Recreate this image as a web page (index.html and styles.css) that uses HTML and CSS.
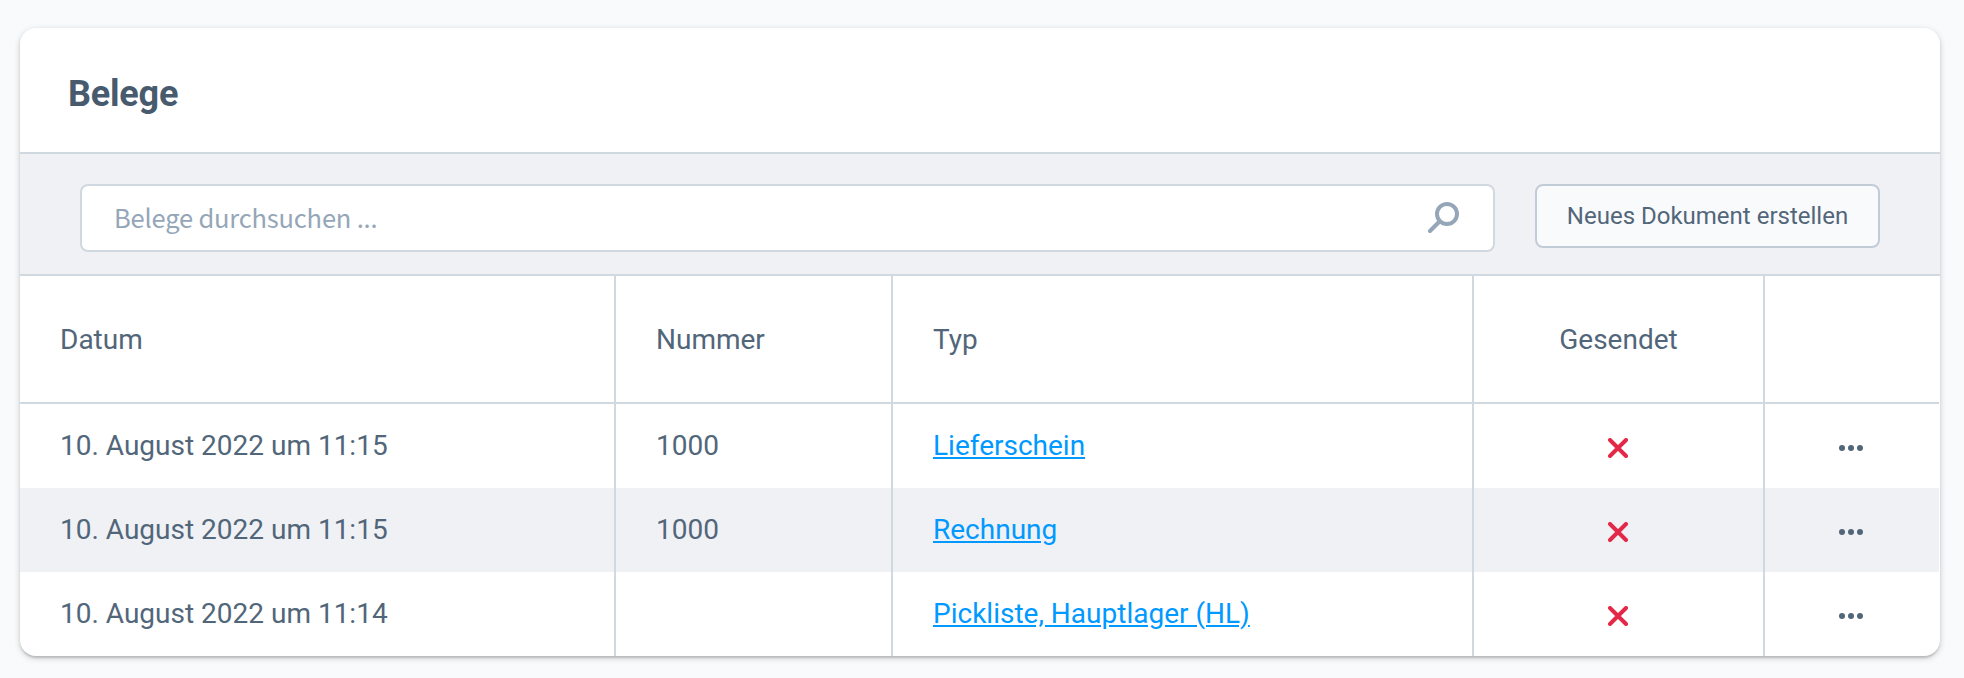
FILE: index.html
```html
<!DOCTYPE html>
<html lang="de">
<head>
<meta charset="utf-8">
<title>Belege</title>
<link rel="stylesheet" href="styles.css">
</head>
<body>
<svg class="sprite" width="0" height="0" aria-hidden="true">
  <symbol id="cross" viewBox="0 0 20 20"><path d="M2 2 18 18M18 2 2 18" fill="none" stroke="currentColor" stroke-width="4" stroke-linecap="round"/></symbol>
  <symbol id="dots" viewBox="0 0 24 6"><circle cx="3" cy="3" r="3"/><circle cx="12" cy="3" r="3"/><circle cx="21" cy="3" r="3"/></symbol>
</svg>
<main class="card">
  <header class="card-header"><h1 class="title">Belege</h1></header>
  <div class="toolbar">
    <label class="search">
      <input class="search-input" type="text" placeholder="Belege durchsuchen ...">
      <svg class="search-icon" width="32" height="32" viewBox="0 0 32 32" fill="none" stroke="currentColor" stroke-width="4" stroke-linecap="round"><circle cx="19" cy="12" r="10"/><path d="M11.5 19.5 2 29"/></svg>
    </label>
    <button class="button" type="button">Neues Dokument erstellen</button>
  </div>
  <table class="grid">
    <colgroup><col class="col-date"><col class="col-number"><col class="col-type"><col class="col-sent"><col class="col-menu"></colgroup>
    <thead>
      <tr><th>Datum</th><th>Nummer</th><th>Typ</th><th class="center">Gesendet</th><th></th></tr>
    </thead>
    <tbody>
      <tr><td>10. August 2022 um 11:15</td><td>1000</td><td><a class="link" href="#">Lieferschein</a></td><td class="center"><svg class="cross" width="20" height="20"><use href="#cross"/></svg></td><td class="center"><svg class="dots" width="24" height="6"><use href="#dots"/></svg></td></tr>
      <tr><td>10. August 2022 um 11:15</td><td>1000</td><td><a class="link" href="#">Rechnung</a></td><td class="center"><svg class="cross" width="20" height="20"><use href="#cross"/></svg></td><td class="center"><svg class="dots" width="24" height="6"><use href="#dots"/></svg></td></tr>
      <tr><td>10. August 2022 um 11:14</td><td></td><td><a class="link" href="#">Pickliste, Hauptlager (HL)</a></td><td class="center"><svg class="cross" width="20" height="20"><use href="#cross"/></svg></td><td class="center"><svg class="dots" width="24" height="6"><use href="#dots"/></svg></td></tr>
    </tbody>
  </table>
</main>
</body>
</html>
```
FILE: styles.css
```css
* { box-sizing: border-box; }
body {
  margin: 0;
  padding: 28px 24px 22px 20px;
  background: #f9fafc;
  color: #52667a;
  font-family: Roboto, "Liberation Sans", sans-serif;
  font-size: 28px;
}
.sprite { display: none; }
.card {
  height: 628px;
  overflow: hidden;
  background: #fff;
  border-radius: 16px;
  box-shadow: 0 2px 2px rgba(0, 0, 0, .08), 0 4px 2px -2px rgba(0, 0, 0, .06), 0 2px 6px rgba(0, 0, 0, .2);
}
.card-header {
  height: 126px;
  padding: 0 48px;
  display: flex;
  align-items: center;
  border-bottom: 2px solid #d1d9e0;
}
.title {
  margin: 8px 0 0;
  font-size: 36px;
  line-height: 44px;
  font-weight: 700;
  letter-spacing: -.2px;
  color: #485a6d;
}
.toolbar {
  height: 122px;
  padding: 30px 60px 0;
  display: flex;
  align-items: flex-start;
  gap: 40px;
  background: #f0f1f5;
  border-bottom: 2px solid #d1d9e0;
}
.search {
  flex: 1;
  height: 68px;
  padding: 0 33px 0 32px;
  display: flex;
  align-items: center;
  background: #fff;
  border: 2px solid #d1d9e0;
  border-radius: 8px;
}
.search-input {
  flex: 1;
  min-width: 0;
  height: 60px;
  padding: 0 0 3px;
  border: 0;
  outline: 0;
  background: none;
  font: 400 25.5px "Noto Sans CJK SC", sans-serif;
  letter-spacing: -.2px;
}
.search-input::placeholder { color: #94a6b8; opacity: 1; }
.search-icon { color: #94a6b8; }
.button {
  width: 345px;
  height: 64px;
  padding: 0;
  background: #f9fafc;
  border: 2px solid #c2ccd6;
  border-radius: 8px;
  color: #52667a;
  font: 400 24px Roboto, sans-serif;
}
.grid {
  width: 1919px;
  table-layout: fixed;
  border-collapse: separate;
  border-spacing: 0;
}
.col-date { width: 596px; }
.col-number { width: 277px; }
.col-type { width: 581px; }
.col-sent { width: 291px; }
.col-menu { width: 174px; }
.grid th, .grid td {
  padding: 0 38px 0 40px;
  border-right: 2px solid #d1d9e0;
  font-weight: 400;
  text-align: left;
  vertical-align: middle;
  white-space: nowrap;
}
.grid th:last-child, .grid td:last-child { border-right: 0; }
.grid th { height: 128px; border-bottom: 2px solid #d1d9e0; }
.grid td { height: 84px; padding-bottom: 2px; }
.grid tbody tr:nth-child(even) { background: #f0f1f5; }
.grid .center { padding: 0; text-align: center; }
.grid td.center { padding-right: 2px; }
.link { color: #0099ff; }
.cross { display: block; margin: 4px auto 0; color: #e42848; }
.dots { display: block; margin: 4px auto 0; fill: #52667a; }
```
